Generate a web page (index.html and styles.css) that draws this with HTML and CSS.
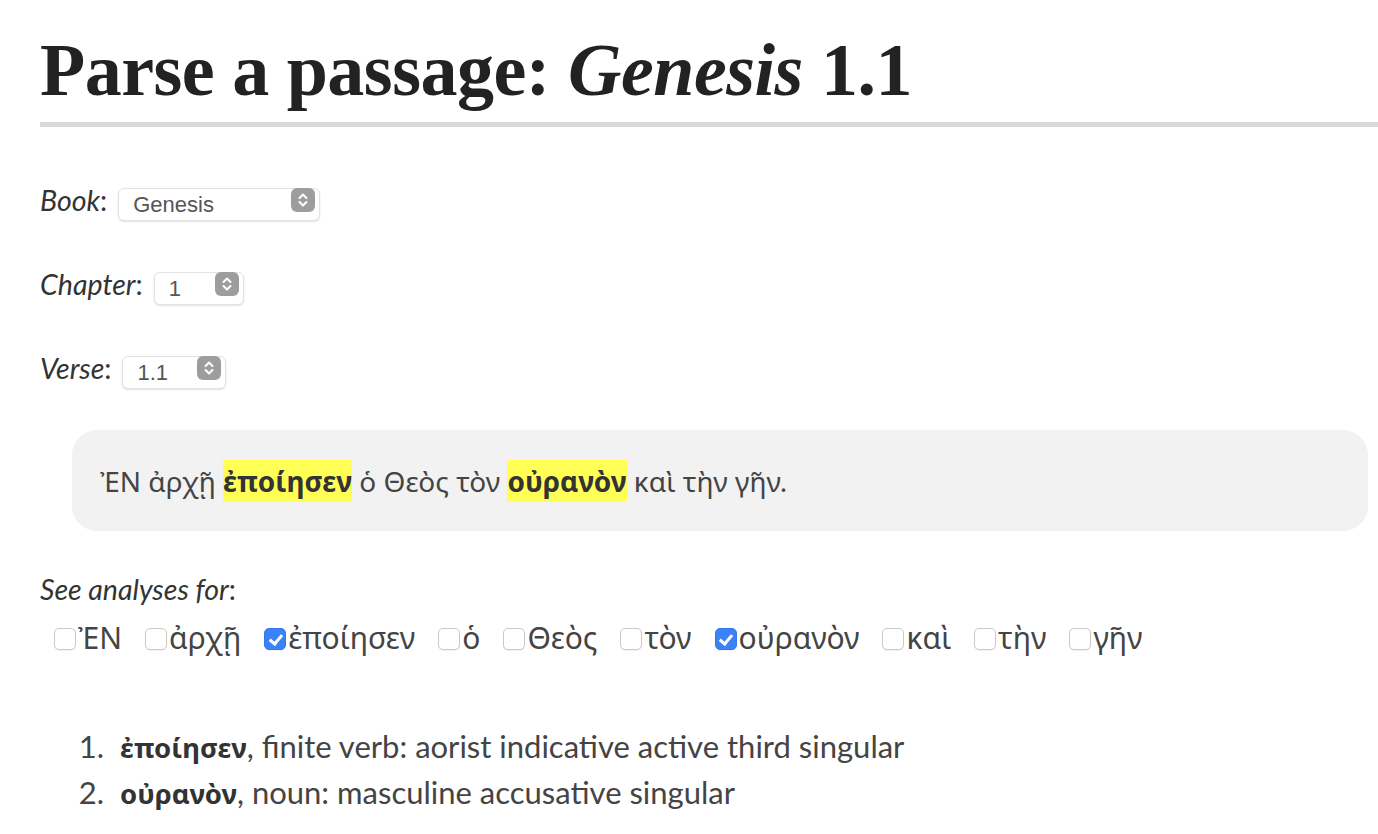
FILE: index.html
```html
<!DOCTYPE html>
<html lang="en">
<head>
<meta charset="utf-8">
<title>Parse a passage: Genesis 1.1</title>
<link rel="stylesheet" href="styles.css">
</head>
<body>
<main class="page">
  <h1 class="title">Parse a passage: <em>Genesis</em> 1.1</h1>

  <div class="field">
    <label class="field-label" for="book"><em>Book</em>:</label>
    <span class="select-wrap select-book">
      <select id="book" class="select"><option>Genesis</option></select>
      <svg class="stepper" viewBox="0 0 24 24" aria-hidden="true"><rect x="0" y="0" width="24" height="24" rx="6" fill="#9d9d9d"/><path d="M8.5 10 L12 6.5 L15.5 10 M8.5 14 L12 17.5 L15.5 14" fill="none" stroke="#fff" stroke-width="2" stroke-linecap="round" stroke-linejoin="round"/></svg>
    </span>
  </div>

  <div class="field">
    <label class="field-label" for="chapter"><em>Chapter</em>:</label>
    <span class="select-wrap select-chapter">
      <select id="chapter" class="select"><option>1</option></select>
      <svg class="stepper" viewBox="0 0 24 24" aria-hidden="true"><rect x="0" y="0" width="24" height="24" rx="6" fill="#9d9d9d"/><path d="M8.5 10 L12 6.5 L15.5 10 M8.5 14 L12 17.5 L15.5 14" fill="none" stroke="#fff" stroke-width="2" stroke-linecap="round" stroke-linejoin="round"/></svg>
    </span>
  </div>

  <div class="field">
    <label class="field-label" for="verse"><em>Verse</em>:</label>
    <span class="select-wrap select-verse">
      <select id="verse" class="select"><option>1.1</option></select>
      <svg class="stepper" viewBox="0 0 24 24" aria-hidden="true"><rect x="0" y="0" width="24" height="24" rx="6" fill="#9d9d9d"/><path d="M8.5 10 L12 6.5 L15.5 10 M8.5 14 L12 17.5 L15.5 14" fill="none" stroke="#fff" stroke-width="2" stroke-linecap="round" stroke-linejoin="round"/></svg>
    </span>
  </div>

  <blockquote class="passage">
    <p class="grc" lang="grc">ἘΝ ἀρχῇ <mark class="hl">ἐποίησεν</mark> ὁ Θεὸς τὸν <mark class="hl">οὐρανὸν</mark> καὶ τὴν γῆν.</p>
  </blockquote>

  <p class="see"><em>See analyses for</em>:</p>
  <div class="words grc" lang="grc">
    <label class="word"><input type="checkbox" class="box">ἘΝ</label>
    <label class="word"><input type="checkbox" class="box">ἀρχῇ</label>
    <label class="word"><input type="checkbox" class="box" checked>ἐποίησεν</label>
    <label class="word"><input type="checkbox" class="box">ὁ</label>
    <label class="word"><input type="checkbox" class="box">Θεὸς</label>
    <label class="word"><input type="checkbox" class="box">τὸν</label>
    <label class="word"><input type="checkbox" class="box" checked>οὐρανὸν</label>
    <label class="word"><input type="checkbox" class="box">καὶ</label>
    <label class="word"><input type="checkbox" class="box">τὴν</label>
    <label class="word"><input type="checkbox" class="box">γῆν</label>
  </div>

  <ol class="analyses">
    <li><strong class="grc" lang="grc">ἐποίησεν</strong>, finite verb: aorist indicative active third singular</li>
    <li><strong class="grc" lang="grc">οὐρανὸν</strong>, noun: masculine accusative singular</li>
  </ol>
</main>
</body>
</html>
```

FILE: styles.css
```css
html, body {
  margin: 0;
  padding: 0;
  background: #ffffff;
}

body {
  font-family: "Lato", "Noto Sans", "DejaVu Sans", sans-serif;
  color: #444444;
  font-size: 28px;
}

.grc {
  font-family: "Noto Sans", "DejaVu Sans", sans-serif;
}

.page {
  padding: 0 0 0 40px;
}

.title {
  margin: 0;
  padding: 30px 0 12px 0;
  font-family: "Liberation Serif", "DejaVu Serif", serif;
  font-weight: 700;
  font-size: 74px;
  line-height: 80px;
  color: #222222;
  border-bottom: 5px solid #d9d9d9;
  letter-spacing: -0.5px;
}

.title em {
  font-style: italic;
}

.field {
  display: flex;
  align-items: center;
  height: 34px;
  margin-top: 56px;
}

.field + .field {
  margin-top: 50px;
}

.field-label {
  color: #333333;
  font-size: 28.5px;
  margin-right: 11px;
}

.field-label em {
  font-style: italic;
}

.select-wrap {
  position: relative;
  display: inline-block;
  height: 33px;
}

.select {
  -webkit-appearance: none;
  appearance: none;
  height: 33px;
  box-sizing: border-box;
  border: 1px solid #e2e2e2;
  border-radius: 6px;
  background: #ffffff;
  box-shadow: 0 1px 2px rgba(0, 0, 0, 0.12);
  font-family: "Liberation Sans", "Noto Sans", sans-serif;
  font-size: 22px;
  color: #555555;
  padding: 0 0 0 14px;
  margin: 0;
}

.select-book .select { width: 202px; }
.select-chapter .select { width: 90px; }
.select-verse .select { width: 104px; }

.stepper {
  position: absolute;
  right: 5px;
  top: 4.5px;
  width: 24px;
  height: 24px;
  pointer-events: none;
}

.passage {
  margin: 45px 10px 0 32px;
  background: #f2f2f2;
  border-radius: 25px;
  padding: 0 28px;
  height: 101px;
  display: flex;
  align-items: center;
}

.passage p {
  margin: 0;
  font-size: 28px;
  color: #444444;
}

.hl {
  background: #ffff55;
  color: #333333;
  font-weight: 700;
  padding: 2px 0;
}

.see {
  margin: 41px 0 0 0;
  font-size: 28.5px;
  color: #333333;
  line-height: 34px;
}

.words {
  display: flex;
  flex-wrap: wrap;
  gap: 0 23px;
  margin: 14px 0 0 14px;
  font-size: 30px;
  line-height: 36px;
  color: #444444;
}

.word {
  display: inline-flex;
  align-items: center;
}

.box {
  -webkit-appearance: none;
  appearance: none;
  position: relative;
  box-sizing: border-box;
  width: 22px;
  height: 22px;
  margin: 2px 2px 0 0;
  border: 1px solid #c9c9c9;
  border-radius: 5px;
  background: #ffffff;
  box-shadow: 0 1px 1px rgba(0, 0, 0, 0.06);
}

.box:checked {
  background: #3b82f6;
  border-color: #3478f0;
}

.box:checked::after {
  content: "";
  position: absolute;
  left: 6.5px;
  top: 2.5px;
  width: 5px;
  height: 10px;
  border: solid #ffffff;
  border-width: 0 3px 3px 0;
  transform: rotate(40deg);
}

.analyses {
  margin: 67px 0 0 0;
  padding: 0 0 0 80px;
  font-size: 31px;
  line-height: 46px;
  color: #444444;
}

.analyses li::marker {
  content: counter(list-item) ".\00a0\00a0";
}

.analyses strong {
  font-size: 27.5px;
  line-height: 1;
  font-weight: 700;
  color: #333333;
}
```
